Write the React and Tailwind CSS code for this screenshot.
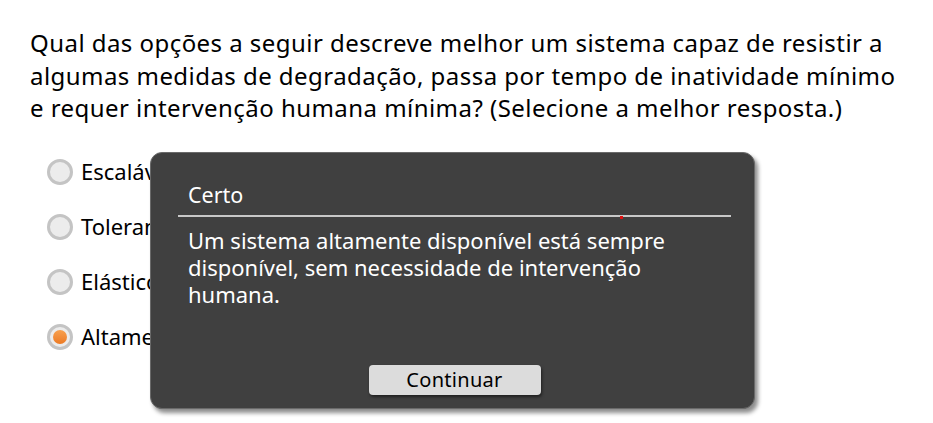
import { useState } from "react";

const options = [
  "Escalável",
  "Tolerante a falhas",
  "Elástico",
  "Altamente disponível",
];

function Radio({ checked }) {
  return (
    <span className="flex h-[26px] w-[26px] shrink-0 items-center justify-center rounded-full border-[3px] border-[#c4c4c4] bg-[#ececec]">
      {checked && (
        <span className="h-[14px] w-[14px] rounded-full bg-gradient-to-b from-[#f7a04e] to-[#ec7a22]" />
      )}
    </span>
  );
}

export default function App() {
  const [selected] = useState(3);

  return (
    <div className="relative h-[423px] w-[933px] overflow-hidden bg-white font-['Noto_Sans',sans-serif] text-black">
      <div className="px-[30px] pt-[27px]">
        <p className="whitespace-nowrap text-[24px] leading-[32.5px] tracking-[0.45px]">
          Qual das opções a seguir descreve melhor um sistema capaz de resistir a
          <br />
          algumas medidas de degradação, passa por tempo de inatividade mínimo
          <br />
          e requer intervenção humana mínima? (Selecione a melhor resposta.)
        </p>
        <ul className="mt-[34px] flex flex-col gap-[29px] pl-[17px]">
          {options.map((o, i) => (
            <li key={o} className="flex h-[26px] items-center gap-[8px] whitespace-nowrap text-[22px]">
              <Radio checked={i === selected} />
              <span>{o}</span>
            </li>
          ))}
        </ul>
      </div>

      <div className="absolute left-[150px] top-[152px] flex h-[257px] w-[605px] flex-col rounded-[12px] border border-[#6a6a6a] bg-[#404040] pb-[13px] pl-[27px] pr-[23px] shadow-[3px_4px_4px_rgba(0,0,0,0.45)]">
        <h2 className="mt-[28px] pl-[10px] text-[21.5px] leading-[28px] text-white">Certo</h2>
        <div className="relative mt-[6px] h-[2px] bg-[#c8c8c8]">
          <span className="absolute left-[442px] top-[1px] h-[3px] w-[3px] bg-[#e01010]" />
        </div>
        <p className="mt-[10px] w-[520px] pl-[10px] text-[22px] leading-[27px] text-white">
          Um sistema altamente disponível está sempre
          <br />
          disponível, sem necessidade de intervenção
          <br />
          humana.
        </p>
        <div className="mt-auto flex justify-center">
          <button className="h-[30px] w-[172px] rounded-[4px] bg-[#dcdcdc] text-[20px] leading-[30px] tracking-[0.3px] text-black shadow-[1px_2px_3px_rgba(0,0,0,0.5)]">
            Continuar
          </button>
        </div>
      </div>
    </div>
  );
}
